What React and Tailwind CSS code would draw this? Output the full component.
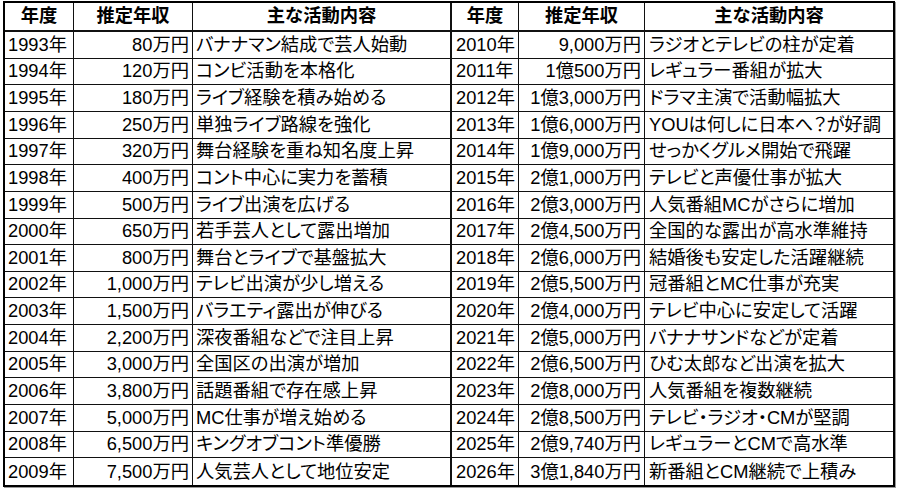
import React from "react";

const leftRows = [
  ["1993年", "80万円", "バナナマン結成で芸人始動"],
  ["1994年", "120万円", "コンビ活動を本格化"],
  ["1995年", "180万円", "ライブ経験を積み始める"],
  ["1996年", "250万円", "単独ライブ路線を強化"],
  ["1997年", "320万円", "舞台経験を重ね知名度上昇"],
  ["1998年", "400万円", "コント中心に実力を蓄積"],
  ["1999年", "500万円", "ライブ出演を広げる"],
  ["2000年", "650万円", "若手芸人として露出増加"],
  ["2001年", "800万円", "舞台とライブで基盤拡大"],
  ["2002年", "1,000万円", "テレビ出演が少し増える"],
  ["2003年", "1,500万円", "バラエティ露出が伸びる"],
  ["2004年", "2,200万円", "深夜番組などで注目上昇"],
  ["2005年", "3,000万円", "全国区の出演が増加"],
  ["2006年", "3,800万円", "話題番組で存在感上昇"],
  ["2007年", "5,000万円", "MC仕事が増え始める"],
  ["2008年", "6,500万円", "キングオブコント準優勝"],
  ["2009年", "7,500万円", "人気芸人として地位安定"],
];

const rightRows = [
  ["2010年", "9,000万円", "ラジオとテレビの柱が定着"],
  ["2011年", "1億500万円", "レギュラー番組が拡大"],
  ["2012年", "1億3,000万円", "ドラマ主演で活動幅拡大"],
  ["2013年", "1億6,000万円", "YOUは何しに日本へ？が好調"],
  ["2014年", "1億9,000万円", "せっかくグルメ開始で飛躍"],
  ["2015年", "2億1,000万円", "テレビと声優仕事が拡大"],
  ["2016年", "2億3,000万円", "人気番組MCがさらに増加"],
  ["2017年", "2億4,500万円", "全国的な露出が高水準維持"],
  ["2018年", "2億6,000万円", "結婚後も安定した活躍継続"],
  ["2019年", "2億5,500万円", "冠番組とMC仕事が充実"],
  ["2020年", "2億4,000万円", "テレビ中心に安定して活躍"],
  ["2021年", "2億5,000万円", "バナナサンドなどが定着"],
  ["2022年", "2億6,500万円", "ひむ太郎など出演を拡大"],
  ["2023年", "2億8,000万円", "人気番組を複数継続"],
  ["2024年", "2億8,500万円", "テレビ・ラジオ・CMが堅調"],
  ["2025年", "2億9,740万円", "レギュラーとCMで高水準"],
  ["2026年", "3億1,840万円", "新番組とCM継続で上積み"],
];

const headers = ["年度", "推定年収", "主な活動内容", "年度", "推定年収", "主な活動内容"];

const App = () => {
  return (
    <div className="w-[900px] h-[490px] bg-white pt-[1px] pl-[3px] font-['Liberation_Sans','Noto_Sans_CJK_JP',sans-serif] text-black text-[18.3px] leading-none">
      <div className="grid grid-cols-[69px_119px_259px_67px_126px_248px] grid-rows-[29px_repeat(17,minmax(0,1fr))] w-[892px] h-[486px] border-2 border-black shadow-[1px_1px_0_#9a9a9a]">
        {/* header row */}
        {headers.map((h, i) => (
          <div
            key={"h" + i}
            className={
              "flex items-center justify-center font-bold border-b-2 border-[#111] " +
              (i === 2 ? "border-r-2 " : i === 5 ? "" : "border-r ")
            }
          >
            {h}
          </div>
        ))}

        {/* body rows: left half and right half side by side */}
        {leftRows.map((l, r) => {
          const rt = rightRows[r];
          const last = r === leftRows.length - 1;
          const rowBorder = last ? "" : "border-b ";
          return (
            <React.Fragment key={r}>
              <div className={"flex items-center pl-[3px] border-r border-[#111] " + rowBorder}>{l[0]}</div>
              <div className={"flex items-center justify-end pr-[3px] border-r border-[#111] " + rowBorder}>{l[1]}</div>
              <div className={"flex items-center pl-[3px] border-r-2 border-[#111] whitespace-nowrap [font-feature-settings:'palt'] " + rowBorder}>{l[2]}</div>
              <div className={"flex items-center pl-[4px] border-r border-[#111] " + rowBorder}>{rt[0]}</div>
              <div className={"flex items-center justify-end pr-[3px] border-r border-[#111] whitespace-nowrap " + rowBorder}>{rt[1]}</div>
              <div className={"flex items-center pl-[4px] border-[#111] whitespace-nowrap [font-feature-settings:'palt'] " + rowBorder}>{rt[2]}</div>
            </React.Fragment>
          );
        })}
      </div>
    </div>
  );
};

export default App;
